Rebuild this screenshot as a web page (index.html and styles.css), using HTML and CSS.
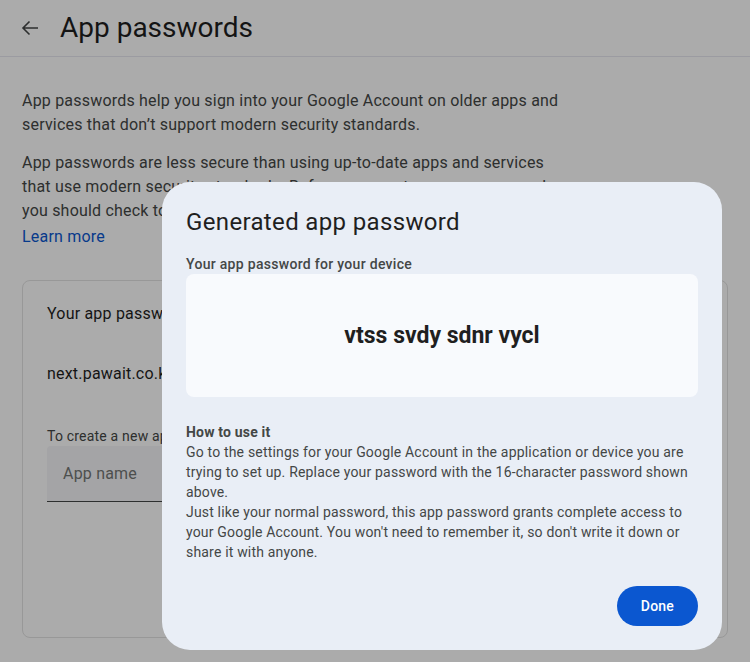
FILE: index.html
```html
<!DOCTYPE html>
<html lang="en">
<head>
<meta charset="utf-8">
<title>App passwords</title>
<link rel="stylesheet" href="styles.css">
</head>
<body>
<div class="page">
  <header class="topbar">
    <span class="back">
      <svg width="24" height="24" viewBox="0 0 24 24"><path d="M20 12H5.5M11.5 5.5L5 12l6.5 6.5" fill="none" stroke="#444746" stroke-width="1.6"/></svg>
    </span>
    <h1 class="title">App passwords</h1>
  </header>
  <main class="content">
    <p class="para">App passwords help you sign into your Google Account on older apps and services that don’t support modern security standards.</p>
    <p class="para">App passwords are less secure than using up-to-date apps and services that use modern security standards. Before you create an app password, you should check to see if your app needs this in order to sign in.<br><a class="link" href="#">Learn more</a></p>
    <section class="card">
      <div class="card-title">Your app passwords</div>
      <div class="card-item">next.pawait.co.ke</div>
      <div class="card-hint">To create a new app specific password, type a name for it below...</div>
      <div class="input">App name</div>
    </section>
  </main>
</div>
<div class="scrim"></div>
<div class="dialog">
  <h2 class="dlg-title">Generated app password</h2>
  <div class="dlg-label">Your app password for your device</div>
  <div class="pw-box"><span class="pw">vtss svdy sdnr vycl</span></div>
  <div class="howto">
    <div class="howto-title">How to use it</div>
    <div class="howto-text">Go to the settings for your Google Account in the application or device you are trying to set up. Replace your password with the 16-character password shown above.</div>
    <div class="howto-text">Just like your normal password, this app password grants complete access to your Google Account. You won't need to remember it, so don't write it down or share it with anyone.</div>
  </div>
  <div class="actions"><button class="done">Done</button></div>
</div>
</body>
</html>
```
FILE: styles.css
```css
html, body {
  margin: 0;
  padding: 0;
  background: #ffffff;
  font-family: Roboto, "Liberation Sans", sans-serif;
  color: #1f1f1f;
}
.page {
  width: 750px;
  height: 662px;
  overflow: hidden;
}
.topbar {
  height: 56px;
  border-bottom: 1px solid #e8e8f0;
  display: flex;
  align-items: center;
  padding-left: 18px;
}
.back {
  width: 24px;
  height: 24px;
  display: flex;
}
.title {
  margin: 0 0 0 18px;
  font-size: 28px;
  font-weight: 400;
  color: #1f1f1f;
  line-height: 36px;
}
.content {
  padding: 32px 22px 0 22px;
}
.para {
  margin: 0 0 14px 0;
  font-size: 16px;
  line-height: 24px;
  letter-spacing: 0.2px;
  color: #444746;
  width: 550px;
}
.link {
  display: inline-block;
  margin-top: 2px;
  color: #0b57d0;
  text-decoration: none;
}
.card {
  margin-top: 31px;
  border: 1px solid #e3e3e3;
  border-radius: 8px;
  height: 358px;
  padding: 21px 24px 0 24px;
  box-sizing: border-box;
  width: 706px;
}
.card-title {
  font-size: 16px;
  line-height: 24px;
  letter-spacing: 0.2px;
  color: #1f1f1f;
}
.card-item {
  margin-top: 36px;
  font-size: 16px;
  line-height: 24px;
  letter-spacing: 0.2px;
  color: #1f1f1f;
}
.card-hint {
  margin-top: 40px;
  font-size: 14px;
  line-height: 20px;
  letter-spacing: 0.2px;
  color: #444746;
}
.input {
  height: 56px;
  box-sizing: border-box;
  background: #f5f5f8;
  border-bottom: 1px solid #444746;
  border-radius: 4px 4px 0 0;
  padding-left: 16px;
  display: flex;
  align-items: center;
  font-size: 16px;
  letter-spacing: 0.2px;
  color: #747775;
  width: 420px;
}
.scrim {
  position: fixed;
  inset: 0;
  background: rgba(0, 0, 0, 0.33);
}
.dialog {
  position: absolute;
  left: 162px;
  top: 182px;
  width: 560px;
  box-sizing: border-box;
  padding: 24px;
  background: #e9eef6;
  border-radius: 28px;
}
.dlg-title {
  margin: 0;
  font-size: 24px;
  line-height: 32px;
  font-weight: 400;
  letter-spacing: 0.35px;
  color: #1f1f1f;
}
.dlg-label {
  margin-top: 16px;
  font-size: 14px;
  line-height: 20px;
  font-weight: 500;
  letter-spacing: 0.3px;
  color: #444746;
}
.pw-box {
  height: 123px;
  background: #f8fafd;
  border-radius: 8px;
  display: flex;
  align-items: center;
  justify-content: center;
}
.pw {
  font-size: 23px;
  font-weight: 700;
  color: #1f1f1f;
  letter-spacing: 0;
}
.howto {
  margin-top: 25px;
  font-size: 14px;
  line-height: 20px;
  letter-spacing: 0.18px;
  color: #444746;
}
.howto-title {
  font-weight: 700;
}
.actions {
  margin-top: 24px;
  display: flex;
  justify-content: flex-end;
}
.done {
  height: 40px;
  padding: 0 24px;
  border: none;
  border-radius: 20px;
  background: #0b57d0;
  color: #ffffff;
  font-family: Roboto, "Liberation Sans", sans-serif;
  font-size: 14px;
  font-weight: 500;
  letter-spacing: 0.2px;
  cursor: pointer;
}
```
